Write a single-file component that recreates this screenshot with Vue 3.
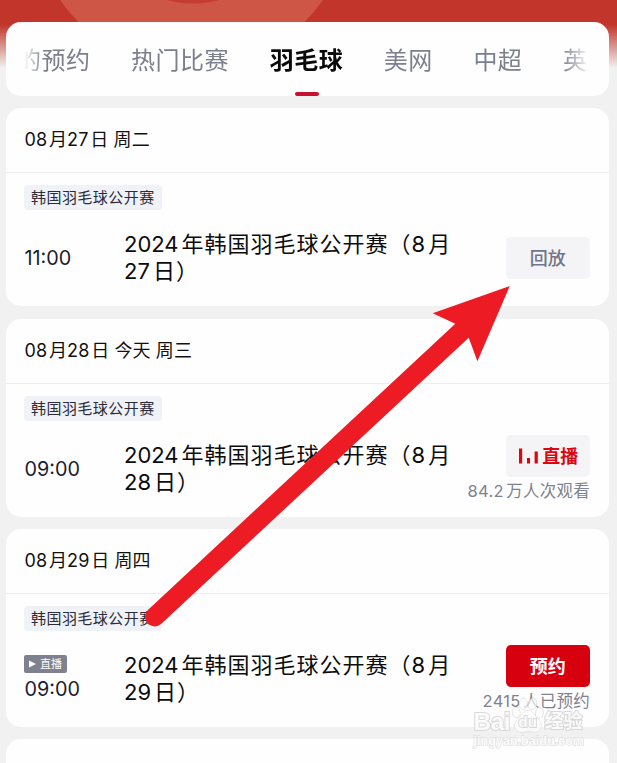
<script setup>
const tabs = ['的预约', '热门比赛', '羽毛球', '美网', '中超', '英超']
const activeTab = '羽毛球'

const days = [
  {
    date: '08月27日 周二',
    time: '11:00',
    title: ['2024年韩国羽毛球公开赛（8月', '27日）'],
    action: 'replay',
    label: '回放',
  },
  {
    date: '08月28日 今天 周三',
    time: '09:00',
    title: ['2024年韩国羽毛球公开赛（8月', '28日）'],
    action: 'live',
    label: '直播',
    note: '84.2万人次观看',
  },
  {
    date: '08月29日 周四',
    time: '09:00',
    badge: '直播',
    title: ['2024年韩国羽毛球公开赛（8月', '29日）'],
    action: 'book',
    label: '预约',
    note: '2415人已预约',
  },
]

// Splits text into digit runs and the rest, so digits can be spaced on their own.
const parts = (text) =>
  text.split(/([\d.]+)/).filter(Boolean).map((t) => ({ t, num: /^\d/.test(t) }))
</script>

<template>
  <div class="screen">
    <svg class="banner" width="617" height="68" viewBox="0 0 617 68">
      <defs>
        <linearGradient id="fade" x1="0" y1="0" x2="0" y2="1">
          <stop offset="0" stop-color="#c2352a" />
          <stop offset="0.36" stop-color="#c2352a" />
          <stop offset="1" stop-color="#f1f1f1" />
        </linearGradient>
      </defs>
      <rect width="617" height="68" fill="url(#fade)" />
      <circle cx="191.5" cy="-92" r="160.5" fill="#cd5647" />
      <circle cx="193" cy="-92" r="95.5" fill="#c53c30" />
    </svg>

    <nav class="tabs">
      <div class="track">
        <span v-for="t in tabs" :key="t" class="tab" :class="{ active: t === activeTab }">{{ t }}</span>
      </div>
    </nav>

    <section v-for="d in days" :key="d.date" class="card">
      <header class="date"><span v-for="(p, i) in parts(d.date)" :key="i" :class="{ num: p.num }">{{ p.t }}</span></header>
      <div class="body">
        <span class="tag">韩国羽毛球公开赛</span>
        <div class="row">
          <div class="when">
            <span v-if="d.badge" class="badge">
              <svg width="7" height="8" viewBox="0 0 7 8"><path d="M0 .4v7.200L7 4z" fill="#fff" /></svg>
              {{ d.badge }}
            </span>
            <span class="time">{{ d.time }}</span>
          </div>
          <div class="title">
            <div v-for="line in d.title" :key="line"><span v-for="(p, i) in parts(line)" :key="i" :class="{ num: p.num }">{{ p.t }}</span></div>
          </div>
          <div class="side">
            <button class="btn" :class="d.action">
              <svg v-if="d.action === 'live'" class="bars" width="19" height="16" viewBox="0 0 19 16">
                <path d="M0 .5h3.200v15H0zM8 10h3v5.500H8zM15.600 3.600h3.200v11.900h-3.200z" fill="#dc0510" />
              </svg>
              <span>{{ d.label }}</span>
            </button>
            <span v-if="d.note" class="note"><span v-for="(p, i) in parts(d.note)" :key="i" :class="{ num: p.num }">{{ p.t }}</span></span>
          </div>
        </div>
      </div>
    </section>
    <section class="card"></section>

    <svg class="arrow" width="617" height="763" viewBox="0 0 617 763">
      <path
        d="M509.8 286 432.7 313.2 455.3 323.7 147.9 609.9A9.7 9.7 0 0 0 161.1 624.1L468.7 337.7 477.4 361.3Z"
        fill="#ed1c24"
      />
    </svg>

    <div class="mark">
      <div class="brand">
        <span class="bai">Bai</span>
        <span class="paw">
          <svg width="34" height="38" viewBox="0 0 34 38">
            <g fill="#fff" fill-opacity=".7" stroke="#d4d4d4" stroke-width="1">
              <ellipse cx="5.2" cy="16.5" rx="3.8" ry="5" transform="rotate(-12 5.2 16.5)" />
              <ellipse cx="12.4" cy="8" rx="4" ry="5.6" />
              <ellipse cx="21.6" cy="8" rx="4" ry="5.6" transform="rotate(10 21.6 8)" />
              <ellipse cx="28.4" cy="17" rx="3.8" ry="5.2" transform="rotate(12 28.4 17)" />
              <path d="M17 14.5c-5 0-5.500 4.500-9.500 8-7 6-3 13.500 3 13.500 3 0 4-.5 6.500-.5s4 .5 6.500.5c6 0 9.500-7.500 3-13.500-4-3.500-4.500-8-9.500-8z" />
            </g>
          </svg>
          <i>du</i>
        </span>
        <span class="jing">经验</span>
      </div>
      <div class="url">jingyan.baidu.com</div>
    </div>
  </div>
</template>

<style>
body {
  background: #f1f1f1;
}
</style>

<style scoped>
.screen {
  position: relative;
  display: flex;
  flex-direction: column;
  gap: 12.300px;
  box-sizing: border-box;
  width: 617px;
  height: 763px;
  padding: 22px 8px 0 6px;
  overflow: hidden;
  background: #f1f1f1;
  color: #111;
  font-family: Inter, 'Noto Sans CJK SC', sans-serif;
}
.banner {
  position: absolute;
  left: 0;
  top: 0;
}
.tabs {
  position: relative;
  flex: none;
  height: 74px;
  padding: 0 19px 0 18px;
  border-radius: 15px;
  background: #fefefe;
}
.track {
  display: flex;
  gap: 40.600px;
  height: 74px;
  overflow: hidden;
  -webkit-mask-image: linear-gradient(90deg, transparent, #000 20px, #000 calc(100% - 28px), transparent);
  mask-image: linear-gradient(90deg, transparent, #000 20px, #000 calc(100% - 28px), transparent);
}
.tab {
  position: relative;
  flex: none;
  height: 74px;
  line-height: 77px;
  font-size: 24px;
  letter-spacing: 0.5px;
  color: #7b7f8e;
  white-space: nowrap;
}
.tab:first-child {
  margin-left: -7px;
}
.tab.active {
  color: #0a0a0a;
  font-weight: 700;
}
.tab.active::after {
  content: '';
  position: absolute;
  left: 50%;
  bottom: 0;
  width: 24px;
  height: 4.500px;
  margin-left: -11px;
  border-radius: 2px;
  background: #c8102e;
}
.card {
  position: relative;
  flex: none;
  height: 198px;
  border-radius: 15px;
  background: #fefefe;
}
.date {
  height: 65px;
  box-sizing: border-box;
  padding-left: 18.500px;
  border-bottom: 1px solid #eee;
  font-size: 18px;
  line-height: 64px;
  letter-spacing: 0.1px;
}
.date .num {
  margin-right: 1.800px;
}
.body {
  padding: 12px 19px 0 18px;
}
.tag {
  display: block;
  box-sizing: border-box;
  width: 138px;
  height: 25px;
  padding-left: 7px;
  border-radius: 4px;
  background: #eff2f6;
  color: #2b2b3a;
  font-size: 15px;
  line-height: 25px;
  letter-spacing: 0.450px;
  white-space: nowrap;
}
.row {
  display: flex;
  align-items: center;
  height: 68px;
  margin-top: 14px;
}
.when {
  display: flex;
  flex-direction: column;
  align-items: flex-start;
  gap: 3px;
  width: 100px;
}
.badge {
  display: flex;
  align-items: center;
  gap: 4px;
  box-sizing: border-box;
  width: 43px;
  height: 18px;
  padding-left: 5px;
  border-radius: 2px;
  background: #7f828e;
  color: #fff;
  font-size: 11px;
  line-height: 19px;
}
.time {
  padding-left: 0.500px;
  font-size: 19.800px;
  line-height: 26px;
  color: #1c1c2c;
}
.title {
  flex: 1;
  font-size: 22px;
  line-height: 27px;
  letter-spacing: 1px;
  color: #0c0c0c;
  white-space: nowrap;
}
.title .num {
  margin-right: 3px;
  letter-spacing: 0;
}
.side {
  position: relative;
  display: flex;
  flex-direction: column;
  align-items: flex-end;
  width: 130px;
}
.btn {
  display: flex;
  align-items: center;
  justify-content: center;
  gap: 4px;
  box-sizing: border-box;
  width: 84.500px;
  height: 42px;
  padding: 1px 0 0;
  border: 0;
  border-radius: 5px;
  background: #f4f4f7;
  color: #71758a;
  font: 500 18px/41px Inter, 'Noto Sans CJK SC', sans-serif;
}
.btn.live {
  padding-left: 2px;
  color: #dc0510;
  font-weight: 700;
}
.btn.book {
  background: #d6000f;
  color: #fff;
  font-weight: 700;
}
.note {
  padding-top: 2px;
  font-size: 16.500px;
  line-height: 24px;
  letter-spacing: 0.250px;
  color: #7f8291;
  white-space: nowrap;
}
.note .num {
  margin-right: 2.500px;
}
.arrow {
  position: absolute;
  left: 0;
  top: 0;
}
.mark {
  position: absolute;
  left: 473.500px;
  top: 696px;
  width: 114px;
  color: #fbfbfb;
  font-family: 'Liberation Sans', 'Noto Sans CJK SC', sans-serif;
  font-weight: 700;
  opacity: 0.9;
  paint-order: stroke fill;
  -webkit-text-stroke: 2px #d6d6d6;
}
.brand {
  display: flex;
  height: 38px;
  white-space: nowrap;
}
.bai {
  width: 37px;
  padding-top: 10px;
  font-size: 24.500px;
  line-height: 32px;
  letter-spacing: -0.500px;
}
.paw {
  position: relative;
  width: 34px;
}
.paw i {
  position: absolute;
  left: 8px;
  top: 17px;
  font-size: 15px;
  font-style: normal;
  line-height: 18px;
}
.jing {
  padding-top: 11px;
  font-size: 19px;
  line-height: 30px;
}
.url {
  font-size: 12.600px;
  line-height: 15px;
  -webkit-text-stroke: 1.400px #dedede;
}
</style>
